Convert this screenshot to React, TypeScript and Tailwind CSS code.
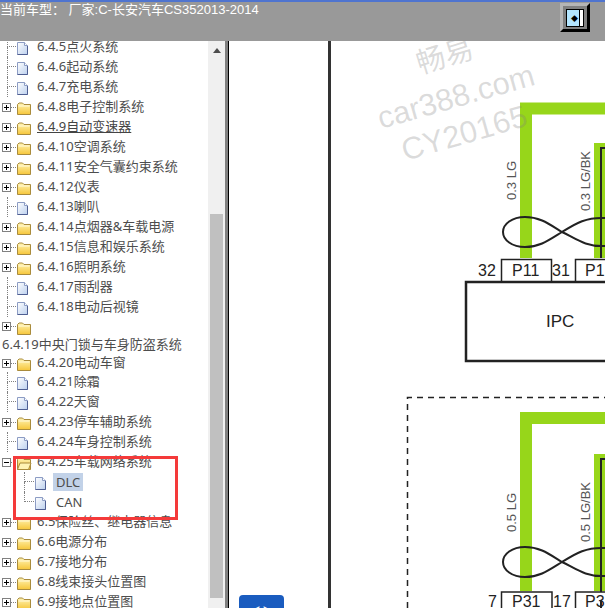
const font = "font-['Noto_Sans','Noto_Sans_CJK_SC',sans-serif]";

type Row = { label: string; kind: "doc" | "folder" | "open" | "none"; sub?: boolean; last?: boolean; h?: number; link?: boolean; sel?: boolean };

const ROWS: Row[] = [
  { label: "6.4.5点火系统", kind: "doc" },
  { label: "6.4.6起动系统", kind: "doc" },
  { label: "6.4.7充电系统", kind: "doc" },
  { label: "6.4.8电子控制系统", kind: "folder" },
  { label: "6.4.9自动变速器", kind: "folder", link: true },
  { label: "6.4.10空调系统", kind: "folder" },
  { label: "6.4.11安全气囊约束系统", kind: "folder" },
  { label: "6.4.12仪表", kind: "folder" },
  { label: "6.4.13喇叭", kind: "doc" },
  { label: "6.4.14点烟器&车载电源", kind: "folder" },
  { label: "6.4.15信息和娱乐系统", kind: "folder" },
  { label: "6.4.16照明系统", kind: "folder" },
  { label: "6.4.17雨刮器", kind: "doc" },
  { label: "6.4.18电动后视镜", kind: "doc" },
  { label: "", kind: "folder", h: 19 },
  { label: "6.4.19中央门锁与车身防盗系统", kind: "none", h: 18 },
  { label: "6.4.20电动车窗", kind: "folder", h: 18 },
  { label: "6.4.21除霜", kind: "doc" },
  { label: "6.4.22天窗", kind: "doc" },
  { label: "6.4.23停车辅助系统", kind: "folder" },
  { label: "6.4.24车身控制系统", kind: "doc" },
  { label: "6.4.25车载网络系统", kind: "open" },
  { label: "DLC", kind: "doc", sub: true, sel: true },
  { label: "CAN", kind: "doc", sub: true, last: true },
  { label: "6.5保险丝、继电器信息", kind: "folder" },
  { label: "6.6电源分布", kind: "folder" },
  { label: "6.7接地分布", kind: "folder" },
  { label: "6.8线束接头位置图", kind: "folder" },
  { label: "6.9接地点位置图", kind: "folder" },
];

function DocIcon() {
  return (
    <svg width="16" height="16" viewBox="0 0 16 16" className="shrink-0">
      <defs>
        <linearGradient id="docFill" x1="0" y1="0" x2="1" y2="1">
          <stop offset="0" stopColor="#ffffff" />
          <stop offset="1" stopColor="#bcd0ee" />
        </linearGradient>
      </defs>
      <path d="M1.5 3.500h7l3 3v9h-10z" fill="url(#docFill)" stroke="#8c9cc4" />
      <path d="M8.500 3.500v3h3" fill="#fff" stroke="#8c9cc4" />
      <path d="M1.500 15.500h10V7" fill="none" stroke="#4f5f92" />
    </svg>
  );
}

function FolderIcon({ open }: { open?: boolean }) {
  return (
    <svg width="16" height="16" viewBox="0 0 16 16" className="shrink-0">
      <defs>
        <linearGradient id="folderFill" x1="0" y1="0" x2="0" y2="1">
          <stop offset="0" stopColor="#fff4b4" />
          <stop offset="1" stopColor="#f6c63a" />
        </linearGradient>
      </defs>
      <path d="M1.500 5.500l1.500-1.500h3.500l1.500 1.500h6.500v10h-13z" fill="url(#folderFill)" stroke="#a98b3c" />
      {open ? (
        <path d="M1.500 15.500l2.500-6.500h11l-2.500 6.500z" fill="#fff3b4" stroke="#a98b3c" />
      ) : (
        <path d="M2.500 7h11" stroke="#fff9dc" />
      )}
    </svg>
  );
}

function Toggle({ open }: { open?: boolean }) {
  return (
    <span className="flex h-[9px] w-[9px] shrink-0 items-center justify-center border border-[#808080] bg-white">
      <svg width="7" height="7" viewBox="0 0 7 7">
        <path d={open ? "M1 3.500h5" : "M1 3.500h5M3.500 1v5"} stroke="#000" />
      </svg>
    </span>
  );
}

function TreeRow({ row }: { row: Row }) {
  const hasToggle = row.kind === "folder" || row.kind === "open";
  const height = row.h ?? 20;
  return (
    <div
      className="flex shrink-0 items-center whitespace-nowrap text-[13px] text-[#4d4d4d]"
      style={{ height }}
    >
      {row.kind === "none" ? (
        <span className="pl-[2px]">{row.label}</span>
      ) : (
        <>
          {hasToggle ? (
            <span className="flex w-[16px] shrink-0 items-center pl-[2px]">
              <Toggle open={row.kind === "open"} />
              <span className="w-[5px] border-b border-dotted border-[#808080]" />
            </span>
          ) : (
            <span className={`flex h-full shrink-0 flex-col ${row.sub ? "ml-[24px] w-[10px]" : "ml-[7px] w-[9px]"}`}>
              <span className="h-1/2 border-b border-l border-dotted border-[#808080]" />
              {!row.last && <span className="h-1/2 border-l border-dotted border-[#808080]" />}
            </span>
          )}
          <span className="flex w-[19px] shrink-0">
            {row.kind === "doc" ? <DocIcon /> : <FolderIcon open={row.kind === "open"} />}
          </span>
          <span className={`${row.sub ? "px-[3px] leading-[18px]" : "ml-[2px]"} ${row.link ? "text-[#444] underline" : ""} ${row.sel ? "bg-[#c2d2e8]" : ""}`}>
            {row.label}
          </span>
        </>
      )}
    </div>
  );
}

// page coordinates: the viewBox starts where the pane does
function Diagram() {
  return (
    <svg viewBox="331 41 274 567" width="274" height="567" className="block">
      <path d="M526 258V108.500H605" fill="none" stroke="#97d61a" strokeWidth="12" />
      <path d="M600 258V149H605" fill="none" stroke="#97d61a" strokeWidth="12" />
      <path d="M601 258V148H605" fill="none" stroke="#222" strokeWidth="2" />
      <path d="M526 591V418H605" fill="none" stroke="#97d61a" strokeWidth="12" />
      <path d="M600 591V460H605" fill="none" stroke="#97d61a" strokeWidth="12" />
      <path d="M601 608V459H605" fill="none" stroke="#222" strokeWidth="2" />

      <path id="twist" d="M605 246C585 247 575 238 562 232C549 224 540 217 525 217C512 217 503 224 503 232C503 240 512 247 525 247C540 247 549 240 562 232C575 224 585 217 605 218" fill="none" stroke="#222" strokeWidth="2" />
      <path d="M605 576C585 577 575 568 562 562C549 554 540 547 525 547C512 547 503 554 503 562C503 570 512 577 525 577C540 577 549 570 562 562C575 554 585 547 605 548" fill="none" stroke="#222" strokeWidth="2" />

      <path d="M605 282H466V361H605" fill="#fff" stroke="#222" strokeWidth="2.500" />
      <rect x="501.500" y="259.500" width="50" height="22" fill="#fff" stroke="#222" strokeWidth="1.500" />
      <rect x="575.500" y="259.500" width="50" height="22" fill="#fff" stroke="#222" strokeWidth="1.500" />
      <path d="M552 608V592H501.500V608M625 592H575.500V608" fill="#fff" stroke="#222" strokeWidth="1.500" />

      <path d="M407.500 608V397.500H605" fill="none" stroke="#222" strokeWidth="1.500" strokeDasharray="6 5" />

      <g fill="#222" fontFamily="'Liberation Sans',sans-serif" fontSize="16">
        <text x="478" y="276">32</text>
        <text x="552" y="276">31</text>
        <text x="512" y="276">P11</text>
        <text x="585" y="276">P1</text>
        <text x="488" y="607">7</text>
        <text x="553" y="607">17</text>
        <text x="512" y="607">P31</text>
        <text x="585" y="607">P3</text>
      </g>
      <text x="546" y="327" fill="#222" fontFamily="'Liberation Sans',sans-serif" fontSize="17">IPC</text>
      <g fill="#555" fontFamily="'Liberation Sans',sans-serif" fontSize="13">
        <text transform="translate(516 200) rotate(-90)">0.3 LG</text>
        <text transform="translate(590 211) rotate(-90)">0.3 LG/BK</text>
        <text transform="translate(516 532) rotate(-90)">0.5 LG</text>
        <text transform="translate(590 542) rotate(-90)">0.5 LG/BK</text>
      </g>

      <g fill="#808080" fillOpacity="0.28" fontFamily="'Liberation Sans','Noto Sans CJK SC',sans-serif">
        <text x="420" y="74" fontSize="29" transform="rotate(-17 420 74)">畅易</text>
        <text x="381" y="129" fontSize="31" transform="rotate(-16 381 129)">car388.com</text>
        <text x="405" y="161" fontSize="31" transform="rotate(-16 405 161)">CY20165</text>
      </g>
    </svg>
  );
}

export default function App() {
  return (
    <div className={`relative flex h-[608px] w-[605px] flex-col overflow-hidden bg-white ${font}`}>
      <div className="h-[2px] shrink-0 bg-[#4f74cf]" />
      <div className="flex h-[39px] shrink-0 items-start justify-between bg-[#999999] pr-[15px]">
        <span className="whitespace-nowrap font-['Liberation_Sans','Noto_Sans_CJK_SC',sans-serif] text-[13px] leading-[16px] text-white">当前车型： 厂家:C-长安汽车CS352013-2014</span>
        <span className="mt-[1px] h-[29px] w-[30px] border-[3px] border-b-black border-l-[#b5b5b5] border-r-black border-t-[#b5b5b5] bg-[#808080] pl-[3px] pt-[3px]">
          <span className="flex h-[18px] w-[18px] border border-black bg-white">
            <span className="flex h-full w-[13px] items-center justify-end border-r border-black bg-[#b4e6ff] pr-[1px] text-[7px] leading-none text-black">◆</span>
          </span>
        </span>
      </div>
      <div className="flex min-h-0 flex-1">
        <div className="w-[208px] shrink-0 overflow-hidden">
          <div className="mt-[-4px] flex flex-col">
            {ROWS.map((r, i) => (
              <TreeRow key={i} row={r} />
            ))}
          </div>
        </div>
        <div className="flex w-[17px] shrink-0 flex-col items-center bg-[#f0f0f0]">
          <svg width="8" height="5" viewBox="0 0 8 5" className="mt-[7px]">
            <path d="M4 0l4 5H0z" fill="#4d4d4d" />
          </svg>
          <div className="mt-[161px] h-[384px] w-[13px] bg-[#c0c0c0]" />
        </div>
        <div className="w-[3px] shrink-0 bg-[#808080]" />
        <div className="w-[1px] shrink-0 bg-black" />
        <div className="w-[99px] shrink-0" />
        <div className="flex-1 border-l-[3px] border-[#333]">
          <Diagram />
        </div>
      </div>
      <div className="absolute left-[13px] top-[456px] h-[64px] w-[165px] border-[3px] border-[#f43a3a]" />
      <div className="absolute left-[239px] top-[595px] flex h-[13px] w-[45px] justify-center overflow-hidden rounded-t-[4px] bg-[#1a5cbf] pt-[9px] text-[12px] font-bold leading-[12px] text-white">&lt; &gt;</div>
    </div>
  );
}
